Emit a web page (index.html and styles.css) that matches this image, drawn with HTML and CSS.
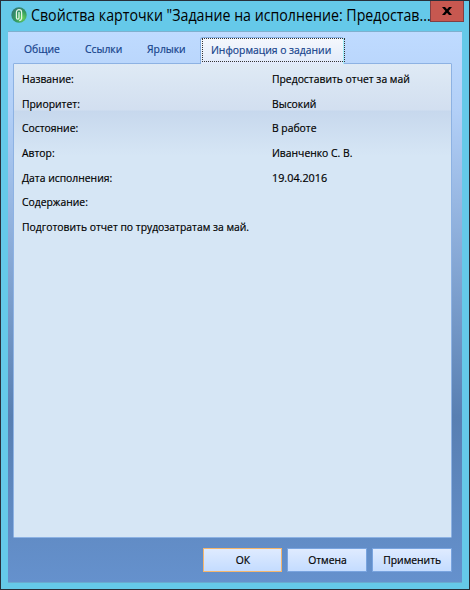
FILE: index.html
```
<!DOCTYPE html>
<html lang="ru">
<head>
<meta charset="utf-8">
<title>Свойства карточки</title>
<link rel="stylesheet" href="styles.css">
</head>
<body>
<div class="window">
  <header class="titlebar">
    <svg class="logo" width="16" height="16" viewBox="0 0 16 16">
      <defs><radialGradient id="g" cx="70%" cy="70%" r="75%"><stop offset="0" stop-color="#6dd45c"/><stop offset=".55" stop-color="#359c60"/><stop offset="1" stop-color="#347c70"/></radialGradient></defs>
      <circle cx="8" cy="8" r="7.7" fill="url(#g)"/>
      <path d="M8 5v5.8a1.3 1.3 0 0 1-2.6 0V5.2a2.6 2.6 0 0 1 5.2 0v6.2a2.6 2.6 0 0 1-2.4 2.2" fill="none" stroke="#e4f4e8" stroke-width="1.2"/>
    </svg>
    <h1 class="title"><span class="text">Свойства карточки "Задание на исполнение: Предостав...</span></h1>
    <button class="close" aria-label="Закрыть"><svg width="10" height="8" viewBox="0 0 10 8"><path d="M0 0h3l2 2.3L7 0h3L6.6 4 10 8H7L5 5.7 3 8H0l3.4-4z" fill="#000"/></svg></button>
  </header>
  <main class="client">
    <nav class="tabs">
      <span class="tab t1"><span class="text">Общие</span></span>
      <span class="tab t2"><span class="text">Ссылки</span></span>
      <span class="tab t3"><span class="text">Ярлыки</span></span>
      <span class="tab active"><span class="focus"><span class="text">Информация о задании</span></span></span>
    </nav>
    <section class="panel">
      <dl class="fields">
        <dt><span class="text">Название:</span></dt><dd><span class="text">Предоставить отчет за май</span></dd>
        <dt><span class="text">Приоритет:</span></dt><dd><span class="text">Высокий</span></dd>
        <dt><span class="text">Состояние:</span></dt><dd><span class="text">В работе</span></dd>
        <dt><span class="text">Автор:</span></dt><dd><span class="text">Иванченко С. В.</span></dd>
        <dt><span class="text">Дата исполнения:</span></dt><dd><span class="text date">19.04.2016</span></dd>
        <dt><span class="text">Содержание:</span></dt><dd></dd>
      </dl>
      <p class="content"><span class="text">Подготовить отчет по трудозатратам за май.</span></p>
    </section>
    <footer class="buttons">
      <button class="btn primary"><span class="text">ОК</span></button>
      <button class="btn"><span class="text">Отмена</span></button>
      <button class="btn"><span class="text">Применить</span></button>
    </footer>
  </main>
</div>
</body>
</html>
```
FILE: styles.css
```
* { box-sizing: border-box; }
body { margin: 0; font-family: "Open Sans", "Noto Sans", sans-serif; font-size: 11.5px; color: #000; }
.text { display: inline-block; transform: scaleX(.9); transform-origin: 0 50%; -webkit-text-stroke: .2px currentColor; }
.window { width: 470px; height: 590px; background: #65c9e9; border: 1px solid #282f3a; padding: 0 7px 6px; display: flex; flex-direction: column; }
.titlebar { height: 30px; flex: none; display: flex; align-items: flex-start; padding-left: 3px; }
.logo { margin-top: 6px; flex: none; }
.title { margin: 2px 0 0 4px; width: 399px; font-size: 16px; line-height: 24px; font-weight: 400; white-space: nowrap; flex: none; }
.title .text { transform: scaleX(.887); -webkit-text-stroke: 0; }
.close { width: 34px; height: 21px; padding: 0; flex: none; background: #c75850; border: 1px solid #823f43; border-top: 0; display: flex; align-items: center; justify-content: center; }
.client { flex: 1; display: flex; flex-direction: column; border-top: 1px solid #7fb0ce; border-bottom: 1px solid #6baace; padding: 5px 10px 10px 5px; background: linear-gradient(#bfdbff 0, #b2cff7 80px, #587fb2 385px, #6591cd 550px); }
.tabs { display: flex; height: 26px; flex: none; color: #15428b; line-height: 24px; white-space: nowrap; }
.tab { height: 26px; }
.t1 { width: 61px; margin-left: 11px; }
.t2 { width: 62px; }
.t3 { width: 53px; }
.tab.active { width: 144px; height: 27px; background: linear-gradient(#f5f8fd, #e1eafa); border: 1px solid #86aedf; border-bottom: 0; border-right-color: #a0eff8; border-radius: 3px 3px 0 0; position: relative; z-index: 1; padding: 0 0 2px 1px; }
.focus { display: block; width: 143px; height: 24px; border: 1px dotted #333; padding-left: 8px; line-height: 21px; }
.panel { flex: 1; border: 1px solid #8db2e3; padding: 2px 8px; background: linear-gradient(#dfeaf5 0, #d2dff0 46px, #c7d8ed 47px, #d6e6f5 92px); border-radius: 1px; }
.fields { margin: 0; display: grid; grid-template-columns: 250px 1fr; grid-auto-rows: 24.7px; line-height: 25px; white-space: nowrap; }
.fields dd { margin: 0; }
.date { transform: scaleX(.94); }
.content { margin: 0; line-height: 25px; white-space: nowrap; }
.buttons { flex: none; display: flex; justify-content: flex-end; gap: 5px; padding-top: 10px; }
.btn { width: 80px; height: 24px; padding: 0; border: 1px solid #79a4df; background: linear-gradient(#dfebff, #c4dcff); font: 11.5px/20px "Open Sans", sans-serif; color: #000; }
.btn .text { transform-origin: 50% 50%; }
.primary { width: 79px; border-color: #f5b66c; }
```
